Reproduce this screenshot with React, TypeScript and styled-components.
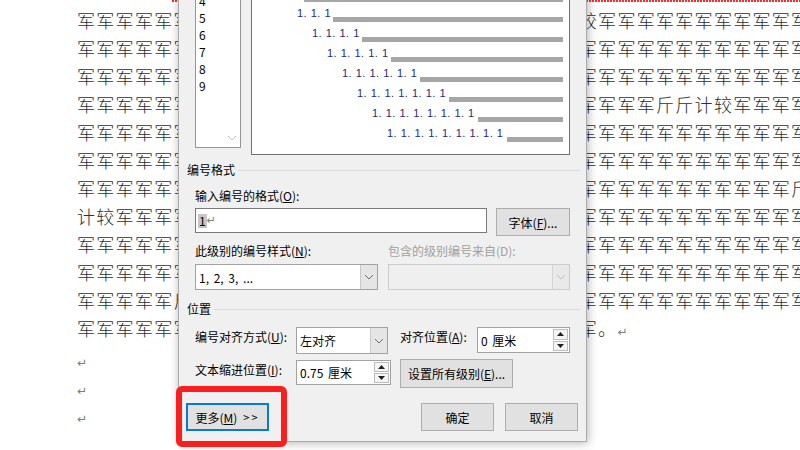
import React from 'react';
import styled, { createGlobalStyle } from 'styled-components';

const GlobalStyle = createGlobalStyle`
    html, body {
        margin: 0;
        padding: 0;
        background: #ffffff;
    }
    body {
        width: 800px;
        height: 450px;
        overflow: hidden;
    }
`;

const Page = styled.div`
    position: relative;
    width: 800px;
    height: 450px;
    overflow: hidden;
    background: #ffffff;
`;

// ---------- document behind the dialog ----------

const DocumentBody = styled.div`
    padding-left: 77px;
    font-family: "Noto Sans CJK SC", sans-serif;
    font-size: 18px;
    font-weight: 300;
    color: #2e2e2e;
`;

const SpellMark = styled.div`
    margin-left: 95px;
    margin-bottom: 4px;
    height: 2px;
    background: repeating-linear-gradient(90deg, #ff2a2a 0 2px, transparent 2px 3px);
`;

const TextLine = styled.div`
    display: flex;
    height: 28px;
    line-height: 28px;
    white-space: nowrap;
    letter-spacing: 1.3px;
`;

// the part of a line that is hidden under the dialog is left out
const HiddenGap = styled.span`
    flex-shrink: 0;
    width: 386px;
`;

const ParaMark = styled.span<{ $size?: number }>`
    font-family: "DejaVu Sans", sans-serif;
    font-size: ${props => props.$size ?? 12}px;
    font-weight: normal;
    color: #7c7c7c;
    letter-spacing: 0;
`;

const EmptyLine = styled.div<{ $first?: boolean }>`
    height: 28px;
    line-height: 28px;
    margin-top: ${props => props.$first ? '3px' : '0'};
`;

// ---------- dialog ----------

const Dialog = styled.div`
    position: absolute;
    left: 178px;
    top: -70px;
    width: 409px;
    height: 512px;
    box-sizing: border-box;
    padding: 9px 16px 0 16px;
    display: flex;
    flex-direction: column;
    background: #f0f0f0;
    border: 1px solid #ababab;
    box-shadow: 1px 1px 9px rgba(0, 0, 0, 0.3);
    font-family: "Noto Sans CJK SC", sans-serif;
    font-size: 12px;
    color: #000000;
`;

const TopRow = styled.div`
    display: flex;
    align-items: flex-start;
    gap: 10px;
`;

const LevelList = styled.div`
    width: 46px;
    height: 208px;
    box-sizing: border-box;
    display: flex;
    background: #ffffff;
    border: 1px solid #969696;
`;

const LevelItems = styled.div`
    flex: 1;
`;

const LevelItem = styled.div`
    height: 17px;
    line-height: 17px;
    padding-left: 3px;
`;

const ScrollTrack = styled.div`
    width: 17px;
    display: flex;
    flex-direction: column;
    justify-content: flex-end;
    align-items: center;
    padding-bottom: 6px;
`;

const Preview = styled.div`
    width: 319px;
    height: 215px;
    box-sizing: border-box;
    padding: 21px 6px 0 0;
    background: #ffffff;
    border: 1px solid #707070;
`;

const PreviewRow = styled.div<{ $indent: number }>`
    display: flex;
    align-items: flex-end;
    height: 20px;
    padding-left: ${props => props.$indent}px;
`;

const PreviewNumber = styled.span<{ $width: number }>`
    width: ${props => props.$width}px;
    flex-shrink: 0;
    height: 14px;
    line-height: 14px;
    margin-bottom: 2px;
    white-space: nowrap;
    font-family: "Liberation Sans", sans-serif;
    font-size: 11px;
    letter-spacing: 0.5px;
    color: #1f2c7c;
`;

const PreviewBar = styled.div`
    flex: 1;
    height: 5px;
    background: #a6a6a6;
`;

const SectionHeader = styled.div<{ $top: number }>`
    display: flex;
    align-items: center;
    gap: 3px;
    height: 16px;
    line-height: 16px;
    margin: ${props => props.$top}px -10px 0 -8px;
    &::after {
        content: '';
        flex: 1;
        height: 1px;
        background: #dadada;
    }
`;

const FieldLabel = styled.div<{ $top?: number; $disabled?: boolean; $width?: number }>`
    height: 16px;
    line-height: 16px;
    margin-top: ${props => props.$top ?? 0}px;
    width: ${props => props.$width ? `${props.$width}px` : 'auto'};
    color: ${props => props.$disabled ? '#a0a0a0' : '#000000'};
    white-space: nowrap;
`;

const FieldRow = styled.div<{ $top: number; $gap?: number; $left?: number }>`
    display: flex;
    align-items: flex-start;
    gap: ${props => props.$gap ?? 0}px;
    margin-top: ${props => props.$top}px;
    margin-left: ${props => props.$left ?? 0}px;
`;

const TextInput = styled.div`
    width: 292px;
    height: 25px;
    box-sizing: border-box;
    display: flex;
    align-items: center;
    padding-left: 2px;
    background: #ffffff;
    border: 1px solid #7a7a7a;
`;

const SelectedDigit = styled.span`
    background: #c6c6c6;
    line-height: 14px;
    padding: 0 1px;
`;

const Button = styled.div<{ $w: number; $h?: number; $focused?: boolean }>`
    width: ${props => props.$w}px;
    height: ${props => props.$h ?? 28}px;
    box-sizing: border-box;
    display: flex;
    align-items: center;
    justify-content: center;
    background: #e1e1e1;
    border: ${props => props.$focused ? '2px solid #0a78d6' : '1px solid #adadad'};
    white-space: nowrap;
`;

const MoreArrows = styled.span`
    margin-left: 6px;
    letter-spacing: 2px;
    font-size: 11px;
`;

const Select = styled.div<{ $w: number; $h: number; $disabled?: boolean }>`
    width: ${props => props.$w}px;
    height: ${props => props.$h}px;
    box-sizing: border-box;
    display: flex;
    background: ${props => props.$disabled ? '#efefef' : '#ffffff'};
    border: 1px solid ${props => props.$disabled ? '#cccccc' : '#a2a2a2'};
`;

const SelectValue = styled.div`
    flex: 1;
    display: flex;
    align-items: center;
    padding-left: 3px;
    white-space: pre;
    word-spacing: 2px;
`;

const SelectDrop = styled.div<{ $disabled?: boolean }>`
    width: 16px;
    display: flex;
    align-items: center;
    justify-content: center;
    background: ${props => props.$disabled ? '#e9e9e9' : '#e5e5e5'};
    border-left: 1px solid ${props => props.$disabled ? '#d4d4d4' : '#c9c9c9'};
`;

const SpinBox = styled.div<{ $w: number; $h: number }>`
    width: ${props => props.$w}px;
    height: ${props => props.$h}px;
    box-sizing: border-box;
    display: flex;
    background: #ffffff;
    border: 1px solid #a2a2a2;
`;

const SpinButtons = styled.div`
    width: 17px;
    display: flex;
    flex-direction: column;
    gap: 1px;
    padding: 1px;
    box-sizing: border-box;
`;

const SpinArrow = styled.div`
    flex: 1;
    display: flex;
    align-items: center;
    justify-content: center;
    background: #f4f4f4;
    border: 1px solid #bdbdbd;
`;

const PositionLabel = styled.div<{ $w: number; $top?: number; $left?: number }>`
    width: ${props => props.$w}px;
    height: 20px;
    line-height: 20px;
    margin-top: ${props => props.$top ?? 0}px;
    margin-left: ${props => props.$left ?? 0}px;
    white-space: nowrap;
`;

const BottomRow = styled.div`
    display: flex;
    align-items: flex-start;
    gap: 11px;
    margin: 15px -8px 0 -9px;
`;

const Spacer = styled.div`
    flex: 1;
`;

const Highlight = styled.div`
    position: absolute;
    left: 176px;
    top: 386px;
    width: 111px;
    height: 61px;
    box-sizing: border-box;
    border: 6px solid #fa1e1e;
    border-radius: 6px;
`;

// ---------- small drawings ----------

function Chevron({ color }: { color: string }) {
    return (
        <svg width="10" height="6" viewBox="0 0 10 6">
            <polyline points="1,1 5,5 9,1" fill="none" stroke={color} strokeWidth="1" />
        </svg>
    )
}

function Triangle({ up }: { up?: boolean }) {
    return (
        <svg width="7" height="4" viewBox="0 0 7 4">
            <polygon points={up ? '0,4 3.5,0 7,4' : '0,0 3.5,4 7,0'} fill="#202020" />
        </svg>
    )
}

function Spin({ value, w, h }: { value: string, w: number, h: number }) {
    return (
        <SpinBox $w={w} $h={h}>
            <SelectValue>{value}</SelectValue>
            <SpinButtons>
                <SpinArrow><Triangle up /></SpinArrow>
                <SpinArrow><Triangle /></SpinArrow>
            </SpinButtons>
        </SpinBox>
    )
}

function Dropdown({ value, w, h, disabled }: { value: string, w: number, h: number, disabled?: boolean }) {
    return (
        <Select $w={w} $h={h} $disabled={disabled}>
            <SelectValue>{value}</SelectValue>
            <SelectDrop $disabled={disabled}>
                <Chevron color={disabled ? '#bdbdbd' : '#6d6d6d'} />
            </SelectDrop>
        </Select>
    )
}

// ---------- data ----------

// a document line: the 6 characters left of the dialog and the ones right of it (from index 26)
const makeLine = (overrides: Record<number, string>, length = 38) => {
    const chars = Array.from({ length }, (_, i) => overrides[i] ?? '军')
    return { left: chars.slice(0, 6).join(''), right: chars.slice(26).join('') }
}

const docLines = [
    makeLine({ 26: '较' }),
    makeLine({}),
    makeLine({}),
    makeLine({ 30: '斤', 31: '斤', 32: '计', 33: '较' }),
    makeLine({}),
    makeLine({}),
    makeLine({ 37: '斤' }),
    makeLine({ 0: '计', 1: '较' }),
    makeLine({}),
    makeLine({}),
    makeLine({ 5: '斤' }),
];

const levels = [1, 2, 3, 4, 5, 6, 7, 8, 9];

export default function App() {
    return (
        <Page>
            <GlobalStyle />
            <DocumentBody>
                <SpellMark />
                {docLines.map((line, i) =>
                    <TextLine key={`line_${i}`}>
                        <span>{line.left}</span>
                        <HiddenGap />
                        <span>{line.right}</span>
                    </TextLine>
                )}
                <TextLine>
                    <span>{'军'.repeat(6)}</span>
                    <HiddenGap />
                    <span>军。<ParaMark>↵</ParaMark></span>
                </TextLine>
                <EmptyLine $first><ParaMark>↵</ParaMark></EmptyLine>
                <EmptyLine><ParaMark>↵</ParaMark></EmptyLine>
                <EmptyLine><ParaMark>↵</ParaMark></EmptyLine>
            </DocumentBody>

            <Dialog>
                <TopRow>
                    <LevelList>
                        <LevelItems>
                            {levels.map((level) => <LevelItem key={`level_${level}`}>{level}</LevelItem>)}
                        </LevelItems>
                        <ScrollTrack>
                            <Chevron color="#c2c2c2" />
                        </ScrollTrack>
                    </LevelList>
                    <Preview>
                        {levels.map((level) =>
                            <PreviewRow key={`preview_${level}`} $indent={15 + 15 * (level - 1)}>
                                <PreviewNumber $width={8 + 14 * (level - 1)}>
                                    {Array(level).fill('1').join('. ')}
                                </PreviewNumber>
                                <PreviewBar />
                            </PreviewRow>
                        )}
                    </Preview>
                </TopRow>

                <SectionHeader $top={7}>编号格式</SectionHeader>
                <FieldLabel $top={10}>输入编号的格式(<u>O</u>):</FieldLabel>
                <FieldRow $top={4} $gap={9}>
                    <TextInput>
                        <SelectedDigit>1</SelectedDigit>
                        <ParaMark $size={11}>↵</ParaMark>
                    </TextInput>
                    <Button $w={74}>字体(<u>F</u>)...</Button>
                </FieldRow>
                <FieldRow $top={7} $gap={10}>
                    <FieldLabel $width={183}>此级别的编号样式(<u>N</u>):</FieldLabel>
                    <FieldLabel $width={182} $disabled>包含的级别编号来自(D):</FieldLabel>
                </FieldRow>
                <FieldRow $top={5} $gap={10}>
                    <Dropdown value="1, 2, 3, ..." w={183} h={26} />
                    <Dropdown value="" w={182} h={26} disabled />
                </FieldRow>

                <SectionHeader $top={11}>位置</SectionHeader>
                <FieldRow $top={10}>
                    <PositionLabel $w={101}>编号对齐方式(<u>U</u>):</PositionLabel>
                    <Dropdown value="左对齐" w={92} h={27} />
                    <PositionLabel $w={77} $left={12}>对齐位置(<u>A</u>):</PositionLabel>
                    <Spin value="0 厘米" w={93} h={26} />
                </FieldRow>
                <FieldRow $top={5}>
                    <PositionLabel $w={101} $top={1}>文本缩进位置(<u>I</u>):</PositionLabel>
                    <FieldRow $top={1}>
                        <Spin value="0.75 厘米" w={95} h={25} />
                    </FieldRow>
                    <FieldRow $top={0} $left={9}>
                        <Button $w={113} $h={29}>设置所有级别(<u>E</u>)...</Button>
                    </FieldRow>
                </FieldRow>

                <BottomRow>
                    <Button $w={83} $focused>更多(<u>M</u>)<MoreArrows>&gt;&gt;</MoreArrows></Button>
                    <Spacer />
                    <Button $w={73}>确定</Button>
                    <Button $w={73}>取消</Button>
                </BottomRow>
            </Dialog>

            <Highlight />
        </Page>
    )
}
